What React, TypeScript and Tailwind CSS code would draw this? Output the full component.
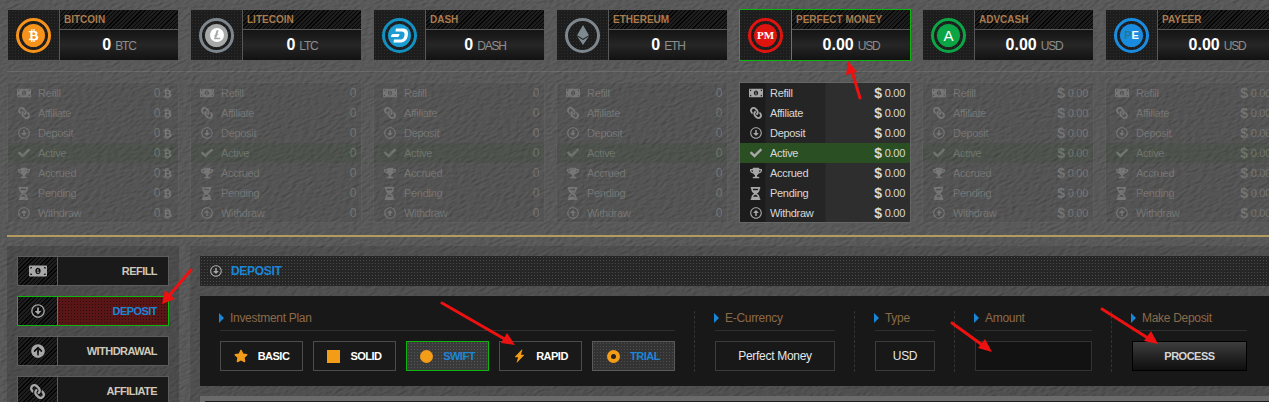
import type { ReactNode } from 'react';
import {
  FaArrowCircleUp,
  FaBtc,
  FaCheck,
  FaEthereum,
  FaHourglassHalf,
  FaLink,
  FaMoneyBillAlt,
  FaRegArrowAltCircleDown,
  FaRegArrowAltCircleUp,
  FaStar,
  FaTrophy,
} from 'react-icons/fa';
import { SiDash, SiLitecoin } from 'react-icons/si';
import { BsLightningChargeFill } from 'react-icons/bs';

const coins = [
  { name: 'BITCOIN', value: '0', unit: 'BTC', color: 'border-[#f7931a]', disc: 'bg-[#f7931a]', icon: <FaBtc className="w-[13px] h-[13px] text-white" />, sign: 'btc' },
  { name: 'LITECOIN', value: '0', unit: 'LTC', color: 'border-[#7d868c]', disc: 'bg-[#a5a9a8]', icon: <SiLitecoin className="w-[14px] h-[14px] text-white" />, sign: '' },
  { name: 'DASH', value: '0', unit: 'DASH', color: 'border-[#138fc0]', disc: 'bg-[#1c9cd0]', icon: <SiDash className="w-[17px] h-[17px] text-white" />, sign: '' },
  { name: 'ETHEREUM', value: '0', unit: 'ETH', color: 'border-[#7d868c]', disc: 'bg-transparent', icon: <FaEthereum className="w-[20px] h-[20px] text-[#7d8a90]" />, sign: '' },
  { name: 'PERFECT MONEY', value: '0.00', unit: 'USD', color: 'border-[#e0140f]', disc: 'bg-[#e0140f]', icon: <span className="font-['Liberation_Serif',serif] text-[11px] font-bold text-white">PM</span>, sign: 'usd', active: true },
  { name: 'ADVCASH', value: '0.00', unit: 'USD', color: 'border-[#0ca545]', disc: 'bg-[#0ca545]', icon: <span className="text-[15px] text-white leading-none">A</span>, sign: 'usd' },
  { name: 'PAYEER', value: '0.00', unit: 'USD', color: 'border-[#1a8ce0]', disc: 'bg-[#1a8ce0]', icon: <span className="text-[11px] font-bold leading-none"><span className="text-[#1f7a8c]">P</span><span className="text-white">E</span></span>, sign: 'usd' },
];

const rows = [
  { label: 'Refill', icon: <FaMoneyBillAlt className="w-[14px] h-[14px]" /> },
  { label: 'Affiliate', icon: <FaLink className="w-[12px] h-[12px] -scale-x-100" /> },
  { label: 'Deposit', icon: <FaRegArrowAltCircleDown className="w-[12px] h-[12px]" /> },
  { label: 'Active', icon: <FaCheck className="w-[12px] h-[12px]" /> },
  { label: 'Accrued', icon: <FaTrophy className="w-[12px] h-[12px]" /> },
  { label: 'Pending', icon: <FaHourglassHalf className="w-[11px] h-[13px]" /> },
  { label: 'Withdraw', icon: <FaRegArrowAltCircleUp className="w-[12px] h-[12px]" /> },
];

const menu = [
  { label: 'REFILL', icon: <FaMoneyBillAlt className="w-[18px] h-[18px]" /> },
  { label: 'DEPOSIT', icon: <FaRegArrowAltCircleDown className="w-[14px] h-[14px]" />, active: true },
  { label: 'WITHDRAWAL', icon: <FaArrowCircleUp className="w-[14px] h-[14px]" /> },
  { label: 'AFFILIATE', icon: <FaLink className="w-[15px] h-[15px] -scale-x-100" /> },
];

const carbon = 'bg-[repeating-linear-gradient(135deg,#050505_0,#050505_1px,#1d1d1d_1px,#1d1d1d_3px)]';
const mesh = 'bg-[#1d1d1d] bg-[radial-gradient(#2e2e2e_1px,transparent_1px)] bg-[length:3px_3px]';

function CoinCard({ coin }: { coin: (typeof coins)[number] }) {
  const edge = coin.active ? 'border-[#0fb50f]' : 'border-[#585858]';
  return (
    <div className={`flex w-[172px] h-[52px] shrink-0 border ${edge}`}>
      <div className={`w-[52px] flex items-center justify-center border-r ${edge} ${mesh}`}>
        <div className={`w-[35px] h-[35px] rounded-full border-[3px] ${coin.color} flex items-center justify-center`}>
          <div className={`w-[23px] h-[23px] rounded-full ${coin.disc} flex items-center justify-center`}>{coin.icon}</div>
        </div>
      </div>
      <div className="flex-1 flex flex-col">
        <div className={`h-[20px] border-b border-[#585858] pl-[4px] flex items-center text-[10px] font-bold text-[#a97c4f] ${carbon}`}>
          {coin.name}
        </div>
        <div className="flex-1 flex items-center justify-center gap-[4px] bg-gradient-to-b from-[#141414] via-[#262626] to-[#121212]">
          <span className="text-[16px] font-bold text-white">{coin.value}</span>
          <span className="text-[12px] tracking-[-1.2px] text-[#8d8d8d] mt-[2px]">{coin.unit}</span>
        </div>
      </div>
    </div>
  );
}

function Amount({ sign, value }: { sign: string; value: string }) {
  if (sign === 'btc') {
    return (
      <span className="flex items-center gap-[2px] text-[12px]">
        {value}
        <FaBtc className="w-[11px] h-[11px]" />
      </span>
    );
  }
  if (sign === 'usd') {
    return (
      <span className="flex items-center gap-[3px]">
        <span className="text-[14px] font-bold">$</span>
        {value}
      </span>
    );
  }
  return <span className="text-[12px]">{value}</span>;
}

function StatTable({ coin }: { coin: (typeof coins)[number] }) {
  return (
    <div
      className={`w-[172px] h-[141px] shrink-0 border ${
        coin.active
          ? 'border-[#666] bg-[linear-gradient(90deg,#1c1c1c_0,#1c1c1c_25px,#252525_26px,#252525_85px,#2e2e2e_86px,#2e2e2e_100%)]'
          : 'border-white/5 bg-black/5 text-white/20'
      }`}
    >
      {rows.map((row) => (
        <div
          key={row.label}
          className={`h-[20px] flex items-center text-[11px] tracking-[-0.3px] pr-[5px] ${coin.active ? 'text-[#d8d8d8]' : ''} ${
            row.label === 'Active' ? (coin.active ? 'bg-[#2a4f22]' : 'bg-[#2a4f22]/15') : ''
          }`}
        >
          <span className={`w-[30px] flex justify-center pl-[1px] ${coin.active ? 'text-[#a8a8a8]' : ''}`}>{row.icon}</span>
          <span className="flex-1">{row.label}</span>
          <Amount sign={coin.sign} value={coin.value} />
        </div>
      ))}
    </div>
  );
}

function FieldLabel({ children }: { children: ReactNode }) {
  return (
    <div className="h-[20px] border-b border-[#2f2f2f] flex items-start gap-[6px] text-[12px] tracking-[-0.3px] text-[#8b6a48] leading-[14px]">
      <span className="mt-[2px] -ml-px w-0 h-0 border-y-[5px] border-y-transparent border-l-[5px] border-l-[#1a86d8]" />
      {children}
    </div>
  );
}

function PlanButton({ label, icon, look }: { label: string; icon: ReactNode; look?: 'on' | 'trial' }) {
  const box =
    look === 'on'
      ? 'border-[#0fb50f] bg-[#3a3a3a] bg-[radial-gradient(#555_1px,transparent_1px)] bg-[length:3px_3px]'
      : look === 'trial'
        ? 'border-[#5a5a5a] bg-[#333] bg-[radial-gradient(#4c4c4c_1px,transparent_1px)] bg-[length:3px_3px]'
        : 'border-[#4c4c4c] bg-[#191919]';
  return (
    <div className={`w-[83px] h-[30px] border flex items-center justify-center gap-[10px] text-[11px] tracking-[-0.5px] font-bold ${box} ${look ? 'text-[#1a86d8]' : 'text-white'}`}>
      {icon}
      {label}
    </div>
  );
}

function Sep() {
  return <div className="w-0 h-[61px] ml-[19px] mr-[20px] border-l border-dashed border-[#333]" />;
}

export default function App() {
  return (
    <div className="relative w-[1269px] h-[402px] overflow-hidden bg-[#4a4a4a] bg-[url('data:image/svg+xml,%3Csvg%20xmlns=%27http://www.w3.org/2000/svg%27%20width=%271600%27%20height=%27800%27%3E%3Cfilter%20id=%27s%27%20x=%270%27%20y=%270%27%20width=%27100%25%27%20height=%27100%25%27%3E%3CfeTurbulence%20type=%27fractalNoise%27%20baseFrequency=%270.16%200.42%27%20numOctaves=%274%27%20seed=%274%27/%3E%3CfeDiffuseLighting%20surfaceScale=%270.85%27%20diffuseConstant=%270.95%27%20lighting-color=%27%23666666%27%3E%3CfeDistantLight%20azimuth=%2760%27%20elevation=%2752%27/%3E%3C/feDiffuseLighting%3E%3C/filter%3E%3Cg%20transform=%27rotate%28-25%20400%20200%29%27%3E%3Crect%20x=%27-800%27%20y=%27-800%27%20width=%273200%27%20height=%272400%27%20filter=%27url%28%23s%29%27/%3E%3C/g%3E%3C/svg%3E')] font-['Liberation_Sans',Arial,sans-serif]">
      {/* Coin cards */}
      <div className="flex gap-[11px] pl-[7px] pt-[9px]">
        {coins.map((coin) => (
          <CoinCard key={coin.name} coin={coin} />
        ))}
      </div>
      <div className="mt-[10px] h-px ml-[7px] bg-white/10" />

      {/* Balance tables */}
      <div className="flex gap-[11px] pl-[7px] mt-[10px]">
        {coins.map((coin) => (
          <StatTable key={coin.name} coin={coin} />
        ))}
      </div>
      <div className="mt-[12px] ml-[7px] h-[2px] bg-[#b39a5f]" />

      <div className="flex gap-[11px] pl-[7px] mt-[9px]">
        {/* Side menu */}
        <div className="w-[172px] shrink-0 h-[200px] bg-black/15 p-[10px] flex flex-col gap-[10px]">
          {menu.map((item) => {
            const edge = item.active ? 'border-[#0fb50f]' : 'border-[#5c5c5c]';
            return (
              <div key={item.label} className={`h-[30px] shrink-0 flex border ${edge}`}>
                <div className={`w-[40px] flex items-center justify-center border-r text-[#a8a8a8] ${edge} ${carbon}`}>{item.icon}</div>
                <div
                  className={`flex-1 flex items-center justify-end pr-[11px] text-[11px] font-bold tracking-[-0.55px] ${
                    item.active
                      ? 'text-[#1a86d8] bg-[#5a1616] bg-[radial-gradient(#2a0c0c_1px,transparent_1px)] bg-[length:3px_3px]'
                      : 'text-[#cfc8ba] bg-[#1a1a1a]'
                  }`}
                >
                  {item.label}
                </div>
              </div>
            );
          })}
        </div>

        {/* Deposit panel */}
        <div className="flex-1 bg-black/10 pl-[10px] pt-[10px]">
          <div className="h-[30px] flex items-center gap-[9px] pl-[10px] bg-[#262626] bg-[radial-gradient(#4a4a4a_1px,transparent_1px)] bg-[length:3px_3px]">
            <FaRegArrowAltCircleDown className="w-[12px] h-[12px] text-[#a8a8a8]" />
            <span className="text-[12px] font-bold text-[#1a86d8] tracking-[-0.3px]">DEPOSIT</span>
          </div>
          <div className="mt-[10px] h-[90px] bg-[#181818] pl-[20px] pt-[15px] flex">
            <div className="w-[455px] shrink-0">
              <FieldLabel>Investment Plan</FieldLabel>
              <div className="mt-[10px] flex gap-[10px]">
                <PlanButton label="BASIC" icon={<FaStar className="w-[14px] h-[14px] text-[#f39c17]" />} />
                <PlanButton label="SOLID" icon={<span className="w-[13px] h-[13px] bg-[#f39c17]" />} />
                <PlanButton label="SWIFT" look="on" icon={<span className="w-[13px] h-[13px] rounded-full bg-[#f39c17]" />} />
                <PlanButton label="RAPID" icon={<BsLightningChargeFill className="w-[13px] h-[14px] text-[#f39c17]" />} />
                <PlanButton label="TRIAL" look="trial" icon={<span className="w-[13px] h-[13px] rounded-full border-[4px] border-[#f39c17] bg-[#222]" />} />
              </div>
            </div>
            <Sep />
            <div className="w-[120px] shrink-0">
              <FieldLabel>E-Currency</FieldLabel>
              <div className="mt-[10px] h-[30px] border border-[#3c3c3c] flex items-center justify-center text-[12px] tracking-[-0.3px] text-[#e6e6e6]">Perfect Money</div>
            </div>
            <Sep />
            <div className="w-[60px] shrink-0">
              <FieldLabel>Type</FieldLabel>
              <div className="mt-[10px] h-[30px] border border-[#3c3c3c] flex items-center justify-center text-[12px] tracking-[-0.3px] text-[#e6e6e6]">USD</div>
            </div>
            <Sep />
            <div className="w-[117px] shrink-0">
              <FieldLabel>Amount</FieldLabel>
              <div className="mt-[10px] h-[30px] border border-[#333] bg-[#121212]" />
            </div>
            <Sep />
            <div className="w-[115px] shrink-0">
              <FieldLabel>Make Deposit</FieldLabel>
              <div className="mt-[10px] h-[30px] border border-black bg-gradient-to-b from-[#3e3e3e] to-[#0e0e0e] flex items-center justify-center text-[11px] tracking-[-0.5px] font-bold text-[#d5d5d5]">PROCESS</div>
            </div>
          </div>
          <div className="mt-[10px] h-[10px] bg-[#6a6a6a] pt-[5px] pl-[5px]">
            <div className="h-full bg-[#1c1c1c]" />
          </div>
        </div>
      </div>

      {/* Annotation arrows */}
      <svg className="absolute inset-0 pointer-events-none" width="1269" height="402" viewBox="0 0 1269 402" fill="none">
        <g stroke="#ee1111" strokeWidth="3" strokeLinecap="round">
          <path d="M860 98L851 68" />
          <path d="M191 270L168 297" />
          <path d="M442 303L508 341" />
          <path d="M952 323L985 347" />
          <path d="M1102 309L1151 340" />
        </g>
        <g fill="#ee1111">
          <path d="M848 61L857 72L846 75Z" />
          <path d="M162 304L165 290L175 299Z" />
          <path d="M515 345L501 343L507 333Z" />
          <path d="M992 352L978 348L985 339Z" />
          <path d="M1158 344L1144 341L1151 331Z" />
        </g>
      </svg>
    </div>
  );
}
